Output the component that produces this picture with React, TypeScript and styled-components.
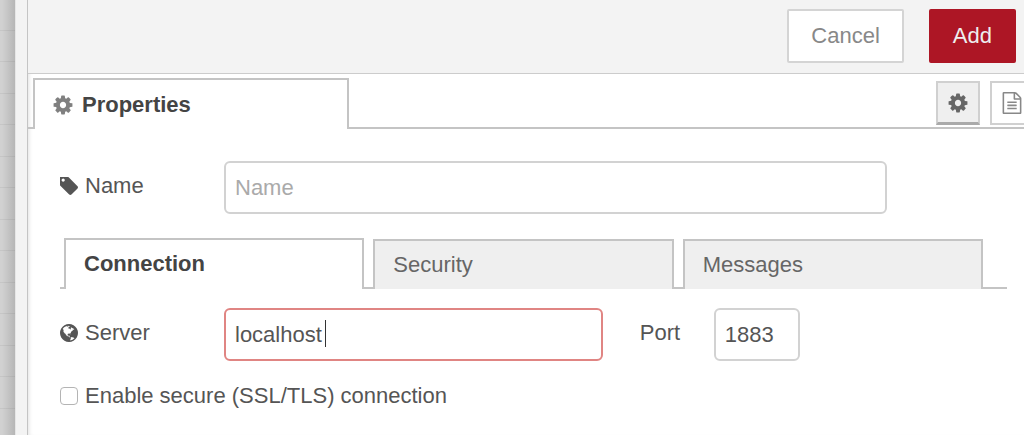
import React from "react";
import styled, { createGlobalStyle, css } from "styled-components";

const GlobalStyle = createGlobalStyle`
  * { box-sizing: border-box; }
  body {
    margin: 0;
    background: #fff;
    color: #555;
    font-family: "Liberation Sans", Helvetica, Arial, sans-serif;
    font-size: 22px;
    line-height: 28px;
  }
  button, input { font: inherit; color: inherit; margin: 0; }
`;

const line = "#c4c4c4";

const Page = styled.div`
  display: flex;
  min-height: 100vh;
  overflow: hidden;
`;

const Workspace = styled.div`
  flex: none;
  width: 15px;
  background:
    linear-gradient(to right, transparent 2px, rgba(0, 0, 0, 0.13)),
    repeating-linear-gradient(
      to bottom,
      #d1d1d1 0 30px,
      #c6c6c6 30px 31px,
      #d1d1d1 31px 61px,
      #c6c6c6 61px 62px,
      #d1d1d1 62px 63px
    );
`;

const Separator = styled.div`
  flex: none;
  width: 13px;
  background: #f3f3f3;
  border-left: 1px solid #e6e6e6;
  border-right: 1px solid #c4c4c4;
`;

const Tray = styled.main`
  flex: 1;
  min-width: 0;
  box-shadow: inset 4px 0 4px -3px rgba(0, 0, 0, 0.12);
`;

const Toolbar = styled.header`
  display: flex;
  justify-content: flex-end;
  gap: 25px;
  padding: 9px 8px 10px;
  background: #f3f3f3;
  border-bottom: 1px solid #ccc;
`;

const Button = styled.button<{ $primary?: boolean }>`
  height: 54px;
  padding: 0 22px;
  border: 2px solid #d4d4d4;
  border-radius: 2px;
  background: #fff;
  color: #888;
  ${(p) =>
    p.$primary &&
    css`
      border-color: #ad1625;
      background: #ad1625;
      color: #eee;
    `}
`;

const TrayTabs = styled.div`
  display: flex;
  align-items: flex-end;
  height: 55px;
  padding-left: 5px;
  overflow: hidden;
  box-shadow: inset 0 -2px ${line};
`;

const TrayTab = styled.button`
  display: flex;
  align-items: center;
  gap: 8px;
  width: 316px;
  height: 51px;
  padding: 0 17px;
  border: 2px solid ${line};
  border-bottom: 0;
  background: #fff;
  color: #444;
  font-weight: bold;
`;

const TrayActions = styled.div`
  display: flex;
  flex: none;
  gap: 10px;
  margin: 0 -10px 4px auto;
`;

const IconButton = styled.button<{ $selected?: boolean }>`
  display: grid;
  place-items: center;
  width: 44px;
  height: 44px;
  padding: 0;
  border: 2px solid #d0d0d0;
  background: #fff;
  color: #888;
  ${(p) =>
    p.$selected &&
    css`
      border-bottom: 3px solid #aaa;
      background: #efefef;
      color: #666;
    `}
`;

const Form = styled.form`
  padding: 32px 17px 24px 32px;
`;

const Row = styled.div`
  display: flex;
  align-items: center;
`;

const Label = styled.label`
  display: flex;
  align-items: center;
  flex: none;
  gap: 7px;
  width: 164px;
  padding-bottom: 3px;
`;

const PortLabel = styled.label`
  flex: none;
  width: 74px;
  margin-left: 37px;
  padding-bottom: 3px;
`;

const Input = styled.input`
  width: 100%;
  height: 53px;
  padding: 0 9px;
  border: 2px solid #d2d2d2;
  border-radius: 6px;
  background: #fff;
  outline: none;
  &::placeholder { color: #aaa; opacity: 1; }
  &[aria-invalid="true"] { border-color: #e08583; }
`;

const Field = styled.div<{ $width: string }>`
  position: relative;
  flex: none;
  width: ${(p) => p.$width};
`;

const Caret = styled.span`
  position: absolute;
  left: 101px;
  top: 12px;
  width: 1px;
  height: 27px;
  background: #333;
`;

const SubTabs = styled.div`
  display: flex;
  align-items: flex-end;
  gap: 9px;
  height: 51px;
  margin: 24px 0 19px;
  padding: 0 24px 0 4px;
  box-shadow: inset 0 -2px ${line};
`;

const SubTab = styled.button<{ $selected?: boolean }>`
  flex: 1;
  height: 50px;
  padding: 0 18px 1px;
  border: 2px solid ${line};
  border-bottom: 0;
  background: #efefef;
  color: #666;
  text-align: left;
  ${(p) =>
    p.$selected &&
    css`
      height: 51px;
      background: #fff;
      color: #444;
      font-weight: bold;
    `}
`;

const CheckRow = styled.label`
  display: flex;
  align-items: center;
  gap: 7px;
  margin-top: 21px;
`;

const Checkbox = styled.input`
  appearance: none;
  width: 18px;
  height: 18px;
  border: 1px solid #b4b4b4;
  border-radius: 4px;
  background: #fff;
  &:checked { background: #888; }
`;

const Icon = styled.svg`
  display: block;
  flex: none;
  fill: currentColor;
`;

const GearIcon = ({ color }: { color?: string }) => (
  <Icon width="22" height="22" viewBox="0 0 1792 1792" color={color} aria-hidden="true">
    <path d="M1152 896q0-106-75-181t-181-75-181 75-75 181 75 181 181 75 181-75 75-181zm512-109v222q0 12-8 23t-20 13l-185 28q-19 54-39 91 35 50 107 138 10 12 10 25t-9 23q-27 37-99 108t-94 71q-12 0-26-9l-138-108q-44 23-91 38-16 136-29 186-7 28-36 28h-222q-14 0-24.500-8.500t-11.500-21.500l-28-184q-49-16-90-37l-141 107q-10 9-25 9-14 0-25-11-126-114-165-168-7-10-7-23 0-12 8-23 15-21 51-66.500t54-70.500q-27-50-41-99l-183-27q-13-2-21-12.500t-8-23.500v-222q0-12 8-23t19-13l186-28q14-46 39-92-40-57-107-138-10-12-10-24 0-10 9-23 26-36 98.500-107.500t94.500-71.500q13 0 26 10l138 107q44-23 91-38 16-136 29-186 7-28 36-28h222q14 0 24.500 8.500t11.500 21.500l28 184q49 16 90 37l142-107q9-9 24-9 13 0 25 10 129 119 165 170 7 8 7 22 0 12-8 23-15 21-51 66.500t-54 70.500q26 50 41 98l183 28q13 2 21 12.500t8 23.500z" />
  </Icon>
);

const TagIcon = () => (
  <Icon width="18" height="18" viewBox="192 192 1451 1451" aria-hidden="true">
    <path d="M576 448q0-53-37.500-90.500t-90.500-37.500-90.500 37.500-37.500 90.500 37.500 90.500 90.500 37.500 90.500-37.500 37.500-90.500zm1067 576q0 53-37 90l-491 492q-39 37-91 37-53 0-90-37l-715-716q-38-37-64.500-101t-26.500-117v-416q0-52 38-90t90-38h416q53 0 117 26.500t102 64.500l715 714q37 39 37 91z" />
  </Icon>
);

const GlobeIcon = () => (
  <Icon width="18" height="18" viewBox="128 128 1536 1536" aria-hidden="true">
    <path d="M896 128q209 0 385.500 103t279.500 279.500 103 385.500-103 385.500-279.500 279.500-385.500 103-385.500-103-279.500-279.500-103-385.500 103-385.500 279.500-279.500 385.500-103zm274 521q-2 1-9.500 9.500t-13.500 9.500q2 0 4.500-5t5-11 3.500-7q6-7 22-15 14-6 52-12 34-8 51 11-2-2 9.500-13t14.500-12q3-2 15-4.500t15-7.500l2-22q-12 1-17.500-7t-6.500-21q0 2-6 8 0-7-4.500-8t-11.500 1-9 1q-10-3-15-7.500t-8-16.500-4-15q-2-5-9.500-11t-9.500-10q-1-2-2.500-5.500t-3-6.500-4-5.500-5.500-2.500-7 5-7.500 10-4.500 5q-3-2-6-1.500t-4.500 1-4.500 3-5 3.500q-3 2-8.500 3t-8.500 2q15-5-1-11-10-4-16-3 9-4 7.500-12t-8.500-14h5q-1-4-8.500-8.500t-17.500-8.500-13-6q-8-5-34-9.500t-33-.5q-5 6-4.500 10.500t4 14 3.500 12.500q1 6-5.500 13t-6.500 12q0 7 14 15.500t10 21.500q-3 8-16 16t-16 12q-5 8-1.500 18.500t10.500 16.500q2 2 1.500 4t-3.500 4.500-5.500 4-6.500 3.500l-3 2q-11 5-20.500-6t-13.500-26q-7-25-16-30-23-8-29 1-5-13-41-26-25-9-58-4 6-1 0-15-7-15-19-12 3-6 4-17.500t1-13.500q3-13 12-23 1-1 7-8.500t9.500-13.500.5-6q35 4 50-11 5-5 11.500-17t10.500-17q9-6 14-5.500t14.500 5.500 14.500 5q14 1 15.500-11t-7.500-20q12 1 3-17-4-7-8-9-12-4-27 5-8 4 2 8-1-1-9.500 10.500t-16.500 17.500-16-5q-1-1-5.500-13.500t-9.500-13.500q-8 0-16 15 3-8-11-15t-24-8q19-12-8-27-7-4-20.500-5t-19.500 4q-5 7-5.500 11.500t5 8 10.500 5.500 11.500 4 8.500 3q14 10 8 14-2 1-8.500 3.500t-11.500 4.500-6 4q-3 4 0 14t-2 14q-5-5-9-17.500t-7-16.500q7 9-25 6l-10-1q-4 0-16 2t-20.500 1-13.500-8q-4-8 0-20 1-4 4-2-4-3-11-9.500t-10-8.500q-46 15-94 41 6 1 12-1 5-2 13-6.500t10-5.500q34-14 42-7l5-5q14 16 20 25-7-4-30-1-20 6-22 12 7 12 5 18-4-3-11.500-10t-14.500-11-15-5q-16 0-22 1-146 80-235 222 7 7 12 8 4 1 5 9t2.500 11 11.500-3q9 8 3 19 1-1 44 27 19 17 21 21 3 11-10 18-1-2-9-9t-9-4q-3 5 .5 18.500t10.500 12.500q-7 0-9.500 16t-2.500 35.500-1 23.500l2 1q-3 12 5.500 34.500t21.500 19.500q-13 3 20 43 6 8 8 9 3 2 12 7.500t15 10 10 10.500q4 5 10 22.500t14 23.500q-2 6 9.500 20t10.500 23q-1 0-2.500 1t-2.500 1q3 7 15.500 14t15.500 13q1 3 2 10t3 11 8 2q2-20-24-62-15-25-17-29-3-5-5.500-15.500t-4.500-14.500q2 0 6 1.500t8.500 3.500 7.500 4 2 3q-3 7 2 17.500t12 18.500 17 19 12 13q6 6 14 19.500t0 13.500q9 0 20 10.500t17 19.500q5 8 8 26t5 24q2 7 8.500 13.500t12.500 9.500l16 8 13 7q5 2 18.500 10.500t21.500 11.500q10 4 16 4t14.500-2.500 13.500-3.500q15-2 29 15t21 21q36 19 55 11-2 1 .5 7.500t8 15.500 9 14.500 5.500 8.500q5 6 18 15t18 15q6-4 7-9-3 8 7 20t18 10q14-3 14-32-31 15-49-18 0-1-2.500-5.500t-4-8.500-2.500-8.500 0-7.500 5-3q9 0 10-3.500t-2-12.500-4-13q-1-8-11-20t-12-15q-5 9-16 8t-16-9q0 1-1.500 5.500t-1.500 6.500q-13 0-15-1 1-3 2.500-17.500t3.500-22.500q1-4 5.500-12t7.500-14.500 4-12.500-4.500-9.500-17.500-2.500q-19 1-26 20-1 3-3 10.500t-5 11.500-9 7q-7 3-24 2t-24-5q-13-8-22.500-29t-9.500-37q0-10 2.500-26.500t3-25-5.500-24.500q3-2 9-9.500t10-10.500q2-1 4.500-1.500t4.500 0 4-1.500 3-6q-1-1-4-3-3-3-4-3 7 3 28.500-1.500t27.500 1.500q15 11 22-2 0-1-2.500-9.500t-.5-13.500q5 27 29 9 3 3 15.500 5t17.500 5q3 2 7 5.500t5.500 4.500 5-.5 8.500-6.500q10 14 12 24 11 40 19 44 7 3 11 2t4.500-9.500 0-14-1.500-12.500l-1-8v-18l-1-8q-15-3-18.500-12t1.500-18.500 15-18.500q1-1 8-3.500t15.500-6.500 12.500-8q21-19 15-35 7 0 11-9-1 0-5-3t-7.500-5-4.500-2q9-5 2-16 5-3 7.500-11t7.500-10q9 12 21 2 7-8 1-16 5-7 20.500-10.500t18.500-9.500q7 2 8-2t1-12 3-12q4-5 15-9t13-5l17-11q3-4 0-4 18 2 31-11 10-11-6-20 3-6-3-9.500t-15-5.500q3-1 11.500-.5t10.500-1.500q15-10-7-16-17-5-43 12zm-163 877q206-36 351-189-3-3-12.500-4.500t-12.500-3.500q-18-7-24-8 1-7-2.500-13t-8-9-12.500-8-11-7q-2-2-7-6t-7-5.500-7.500-4.500-8.500-2-10 1l-3 1q-3 1-5.500 2.500t-5.500 3-4 3 0 2.500q-21-17-36-22-5-1-11-5.500t-10.500-7-10-1.500-11.500 7q-5 5-6 15t-2 13q-7-5 0-17.500t2-18.500q-3-6-10.500-4.500t-12 4.500-11.500 8.500-9 6.500-8.500 5.500-8.500 7.500q-3 4-6 12t-5 11q-2-4-11.500-6.500t-9.500-5.500q2 10 4 35t5 38q7 31-12 48-27 25-29 40-4 22 12 26 0 7-8 20.500t-7 21.500q0 6 2 16z" />
  </Icon>
);

const DocumentIcon = () => (
  <Icon width="22" height="22" viewBox="0 0 1792 1792" aria-hidden="true">
    <path d="M1596 380q28 28 48 76t20 88v1152q0 40-28 68t-68 28h-1344q-40 0-68-28t-28-68v-1600q0-40 28-68t68-28h896q40 0 88 20t76 48zm-444-244v376h376q-10-29-22-41l-313-313q-12-12-41-22zm384 1528v-1024h-416q-40 0-68-28t-28-68v-416h-768v1536h1280zm-1024-864q0-14 9-23t23-9h704q14 0 23 9t9 23v64q0 14-9 23t-23 9h-704q-14 0-23-9t-9-23v-64zm736 224q14 0 23 9t9 23v64q0 14-9 23t-23 9h-704q-14 0-23-9t-9-23v-64q0-14 9-23t23-9h704zm0 256q14 0 23 9t9 23v64q0 14-9 23t-23 9h-704q-14 0-23-9t-9-23v-64q0-14 9-23t23-9h704z" />
  </Icon>
);

export default function App() {
  return (
    <>
      <GlobalStyle />
      <Page>
        <Workspace />
        <Separator />
        <Tray>
          <Toolbar>
            <Button type="button">Cancel</Button>
            <Button type="button" $primary>Add</Button>
          </Toolbar>
          <TrayTabs>
            <TrayTab type="button">
              <GearIcon color="#808080" />
              Properties
            </TrayTab>
            <TrayActions>
              <IconButton type="button" $selected aria-label="Properties">
                <GearIcon />
              </IconButton>
              <IconButton type="button" aria-label="Description">
                <DocumentIcon />
              </IconButton>
            </TrayActions>
          </TrayTabs>
          <Form>
            <Row>
              <Label htmlFor="name"><TagIcon />Name</Label>
              <Field $width="70%">
                <Input id="name" type="text" placeholder="Name" />
              </Field>
            </Row>
            <SubTabs role="tablist">
              <SubTab type="button" role="tab" aria-selected="true" $selected>Connection</SubTab>
              <SubTab type="button" role="tab" aria-selected="false">Security</SubTab>
              <SubTab type="button" role="tab" aria-selected="false">Messages</SubTab>
            </SubTabs>
            <Row>
              <Label htmlFor="server"><GlobeIcon />Server</Label>
              <Field $width="40%">
                <Input id="server" type="text" defaultValue="localhost" aria-invalid="true" />
                <Caret />
              </Field>
              <PortLabel htmlFor="port">Port</PortLabel>
              <Field $width="86px">
                <Input id="port" type="text" defaultValue="1883" />
              </Field>
            </Row>
            <CheckRow>
              <Checkbox type="checkbox" />
              Enable secure (SSL/TLS) connection
            </CheckRow>
          </Form>
        </Tray>
      </Page>
    </>
  );
}
